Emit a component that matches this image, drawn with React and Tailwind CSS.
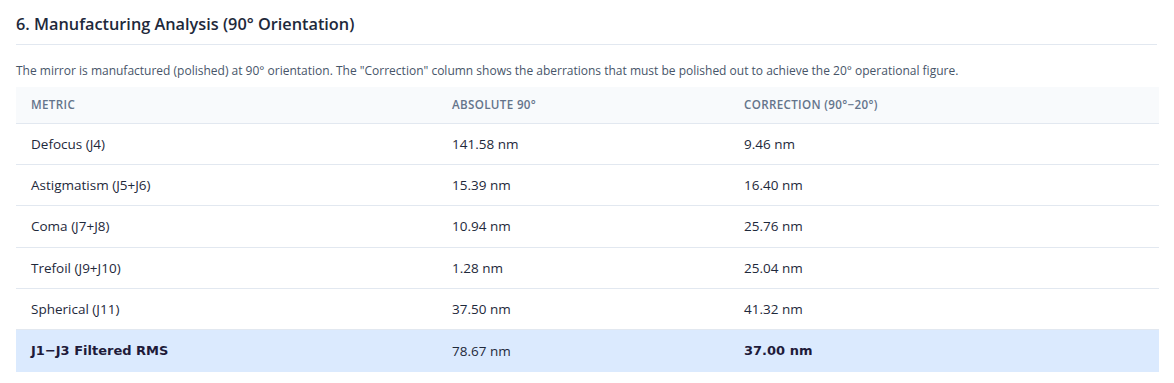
import React from 'react';

const rows = [
  { metric: 'Defocus (J4)', abs: '141.58 nm', corr: '9.46 nm' },
  { metric: 'Astigmatism (J5+J6)', abs: '15.39 nm', corr: '16.40 nm' },
  { metric: 'Coma (J7+J8)', abs: '10.94 nm', corr: '25.76 nm' },
  { metric: 'Trefoil (J9+J10)', abs: '1.28 nm', corr: '25.04 nm' },
  { metric: 'Spherical (J11)', abs: '37.50 nm', corr: '41.32 nm' },
];

const App = () => {
  return (
    <div className="w-[1174px] h-[383px] bg-white px-4 font-['Open_Sans','Noto_Sans',sans-serif] text-[#1e293b]">
      {/* Section title */}
      <h2 className="pt-3 pb-2 text-[16.3px] leading-6 font-semibold border-b border-[#e2e8f0] mr-[1px]">
        6. Manufacturing Analysis (90° Orientation)
      </h2>

      <p className="mt-4 mb-[6px] text-[12px] leading-5 text-[#475569]">
        The mirror is manufactured (polished) at 90° orientation. The "Correction" column shows the aberrations that must be polished out to achieve the 20° operational figure.
      </p>

      <table className="w-[1143px] border-collapse text-[13.5px]">
        <thead>
          <tr className="bg-[#f8fafc] border-b border-[#e2e8f0]">
            <th className="w-[421px] h-[36px] px-[15px] text-left text-[11.6px] font-semibold uppercase tracking-[0.03em] text-[#64748b]">Metric</th>
            <th className="w-[292px] px-[15px] text-left text-[11.6px] font-semibold uppercase tracking-[0.03em] text-[#64748b]">Absolute 90°</th>
            <th className="px-[15px] text-left text-[11.6px] font-semibold uppercase tracking-[0.03em] text-[#64748b]">Correction (90°−20°)</th>
          </tr>
        </thead>
        <tbody>
          {rows.map((r) => (
            <tr key={r.metric} className="border-b border-[#e2e8f0]">
              <td className="h-[41.4px] px-[15px]">{r.metric}</td>
              <td className="px-[15px]">{r.abs}</td>
              <td className="px-[15px]">{r.corr}</td>
            </tr>
          ))}
          <tr className="bg-[#dbeafe]">
            <td className="h-[42px] px-[15px] font-bold text-[13px] font-['DejaVu_Sans',sans-serif] text-[#1e1b3a]">J1−J3 Filtered RMS</td>
            <td className="px-[15px]">78.67 nm</td>
            <td className="px-[15px] font-bold text-[13px] font-['DejaVu_Sans',sans-serif] text-[#1e1b3a]">37.00 nm</td>
          </tr>
        </tbody>
      </table>
    </div>
  );
};

export default App;
